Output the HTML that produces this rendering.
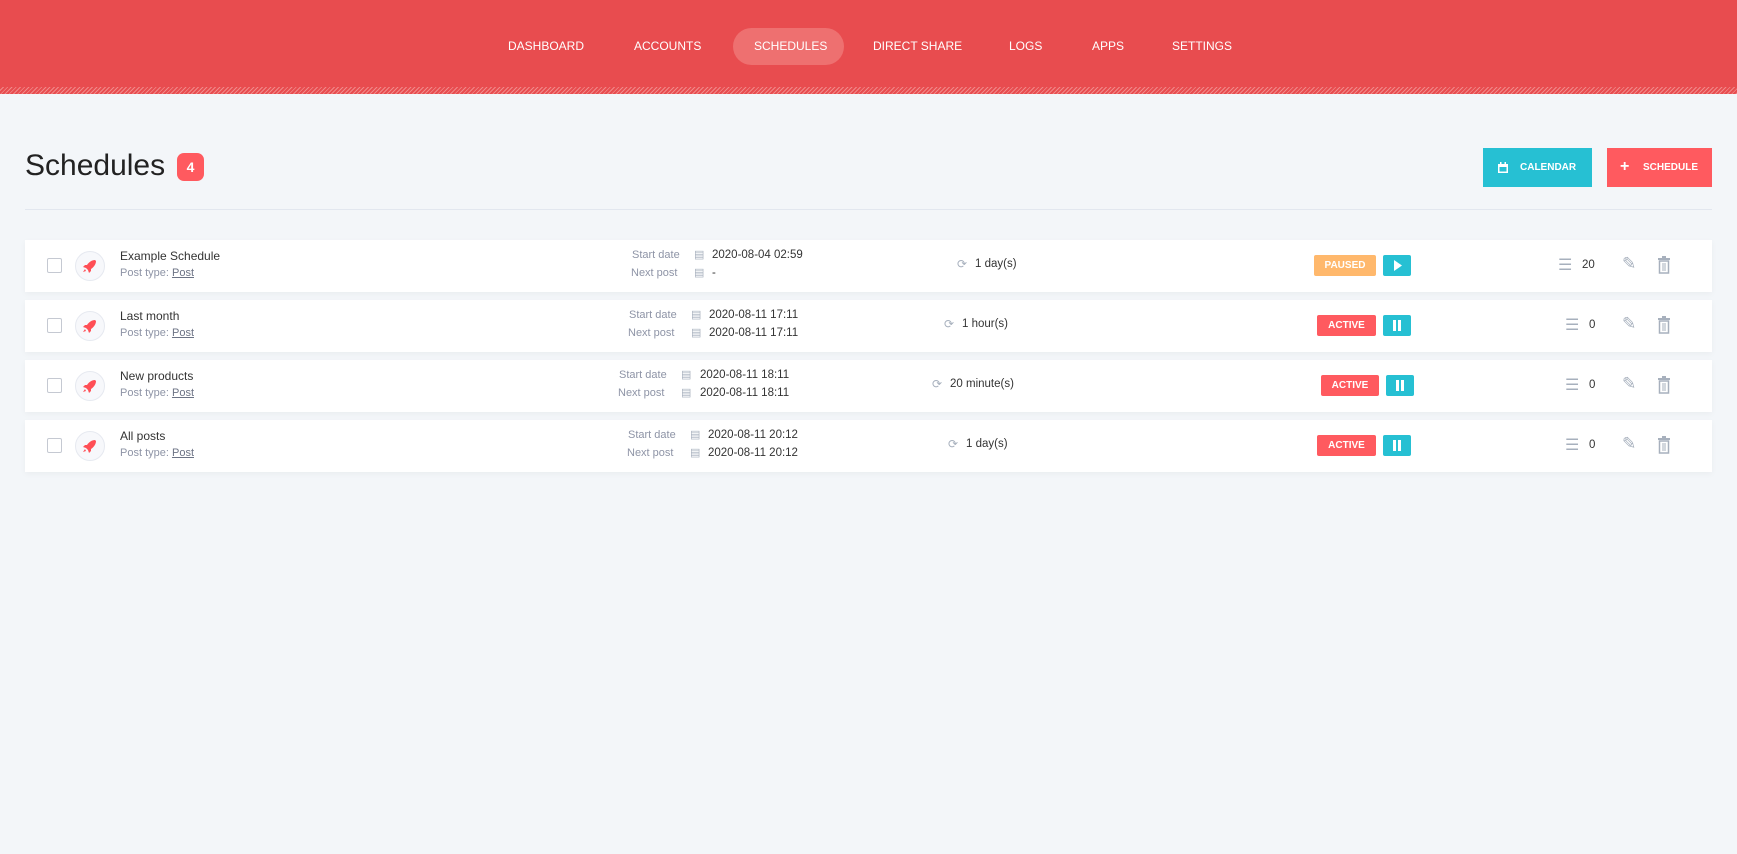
<!DOCTYPE html>
<html><head><meta charset="utf-8"><style>
*{margin:0;padding:0;box-sizing:border-box}
body{width:1737px;height:854px;background:#f3f6f9;font-family:"Liberation Sans",sans-serif;position:relative;overflow:hidden;color:#333}
.hdr{position:absolute;left:0;top:0;width:1737px;height:94px;background:#e84c4f}
.stripe{position:absolute;left:0;top:87px;width:1737px;height:7px;background:repeating-linear-gradient(135deg,#e84c4f 0 2px,#f08a8a 2px 3px)}
.nav{position:absolute;top:39px;color:#fff;font-size:12px;letter-spacing:0}
.pill{position:absolute;left:733px;top:28px;width:111px;height:37px;border-radius:19px;background:#ee7070}
.a{position:absolute;white-space:nowrap}
.title{left:25px;top:149px;font-size:30px;color:#222}
.badge{position:absolute;left:177px;top:153px;width:27px;height:28px;background:#ff5a5f;border-radius:7px;color:#fff;font-size:14px;font-weight:bold;text-align:center;line-height:28px}
.btn{position:absolute;top:148px;height:39px;color:#fff;font-size:10px;font-weight:bold;line-height:39px}
.hr{position:absolute;left:25px;top:209px;width:1687px;height:1px;background:#e2e7ef}
.row{position:absolute;left:25px;width:1687px;height:52px;background:#fff;box-shadow:0 2px 6px rgba(0,0,0,.04)}
.cb{position:absolute;left:22px;top:18px;width:15px;height:15px;border:1px solid #c5c9d2;border-radius:2px;background:#fff}
.rk{position:absolute;left:50px;top:11px;width:30px;height:30px;border-radius:50%;border:1px solid #e6e9f0;background:#f7f8fb}
.nm{left:95px;top:9px;font-size:12px;color:#333}
.pt{left:95px;top:27px;font-size:11px;color:#8e94a6}
.pt u{color:#6c7385}
.lb{font-size:11px;color:#8e94a6}
.vl{font-size:11.5px;color:#333}
.st{position:absolute;top:15px;height:21px;color:#fff;font-size:10px;font-weight:bold;line-height:21px;text-align:center;border-radius:2px}
.pl{position:absolute;top:15px;width:28px;height:21px;background:#26c0d3;border-radius:2px}
.g{color:#a7b0bd}
</style></head><body>
<div class="hdr"></div><div class="stripe"></div>
<div class="pill"></div>
<div class="nav" style="left:508px">DASHBOARD</div>
<div class="nav" style="left:634px">ACCOUNTS</div>
<div class="nav" style="left:754px">SCHEDULES</div>
<div class="nav" style="left:873px">DIRECT SHARE</div>
<div class="nav" style="left:1009px">LOGS</div>
<div class="nav" style="left:1092px">APPS</div>
<div class="nav" style="left:1172px">SETTINGS</div>

<div class="a title">Schedules</div>
<div class="badge">4</div>
<div class="btn" style="left:1483px;width:109px;background:#26c0d3">
<svg style="position:absolute;left:15px;top:14px" width="10" height="11" viewBox="0 0 10 11"><rect x="0" y="2" width="10" height="9" fill="#fff"/><rect x="2" y="0" width="1.5" height="3" fill="#fff"/><rect x="6.5" y="0" width="1.5" height="3" fill="#fff"/><rect x="1.5" y="5" width="7" height="4.5" fill="#26c0d3"/></svg>
<span style="position:absolute;left:37px">CALENDAR</span></div>
<div class="btn" style="left:1607px;width:105px;background:#ff5a5f">
<span style="position:absolute;left:13px;font-size:16px;top:-1px">+</span>
<span style="position:absolute;left:36px">SCHEDULE</span></div>
<div class="hr"></div>

<div class="row" style="top:240px">
<div class="cb"></div><div class="rk"><svg width="28" height="28" viewBox="0 0 28 28"><path d="M19 8c-3 0-6 2-8 5l-2 0-2 2 3 1 2 2 1 3 2-2 0-2c3-2 5-5 5-8z M9 17l-2 3 3-1z" fill="#ff4f56"/></svg></div>
<div class="a nm">Example Schedule</div><div class="a pt">Post type: <u>Post</u></div>
<div class="a lb" style="left:607px;top:9px">Start date</div><div class="a lb" style="left:606px;top:27px">Next post</div>
<div class="a g" style="left:669px;top:8px;font-size:11px">&#9636;</div><div class="a g" style="left:669px;top:26px;font-size:11px">&#9636;</div>
<div class="a vl" style="left:687px;top:9px">2020-08-04 02:59</div><div class="a vl" style="left:687px;top:27px">-</div>
<div class="a g" style="left:932px;top:17px;font-size:12px">&#10227;</div><div class="a vl" style="left:950px;top:18px">1 day(s)</div>
<div class="st" style="left:1289px;width:62px;background:#ffb86c">PAUSED</div>
<div class="pl" style="left:1358px"><svg width="28" height="21"><path d="M11 5l8 5.5-8 5.5z" fill="#fff"/></svg></div>
<div class="a g" style="left:1533px;top:15px;font-size:16px">&#9776;</div><div class="a vl" style="left:1557px;top:19px">20</div>
<div class="a g" style="left:1597px;top:14px;font-size:17px">&#9998;</div>
<svg class="a" style="left:1632px;top:16px" width="14" height="18"><rect x="1" y="2" width="12" height="2" fill="#a7b0bd"/><rect x="5" y="0" width="4" height="2" fill="#a7b0bd"/><rect x="2.5" y="5" width="9" height="12" fill="none" stroke="#a7b0bd" stroke-width="1.5"/><rect x="5.5" y="7" width="1" height="8" fill="#a7b0bd"/><rect x="7.5" y="7" width="1" height="8" fill="#a7b0bd"/></svg>
</div>

<div class="row" style="top:300px">
<div class="cb"></div><div class="rk"><svg width="28" height="28" viewBox="0 0 28 28"><path d="M19 8c-3 0-6 2-8 5l-2 0-2 2 3 1 2 2 1 3 2-2 0-2c3-2 5-5 5-8z M9 17l-2 3 3-1z" fill="#ff4f56"/></svg></div>
<div class="a nm">Last month</div><div class="a pt">Post type: <u>Post</u></div>
<div class="a lb" style="left:604px;top:9px">Start date</div><div class="a lb" style="left:603px;top:27px">Next post</div>
<div class="a g" style="left:666px;top:8px;font-size:11px">&#9636;</div><div class="a g" style="left:666px;top:26px;font-size:11px">&#9636;</div>
<div class="a vl" style="left:684px;top:9px">2020-08-11 17:11</div><div class="a vl" style="left:684px;top:27px">2020-08-11 17:11</div>
<div class="a g" style="left:919px;top:17px;font-size:12px">&#10227;</div><div class="a vl" style="left:937px;top:18px">1 hour(s)</div>
<div class="st" style="left:1292px;width:59px;background:#ff5a5f">ACTIVE</div>
<div class="pl" style="left:1358px"><svg width="28" height="21"><rect x="10" y="5" width="3" height="11" fill="#fff"/><rect x="15" y="5" width="3" height="11" fill="#fff"/></svg></div>
<div class="a g" style="left:1540px;top:15px;font-size:16px">&#9776;</div><div class="a vl" style="left:1564px;top:19px">0</div>
<div class="a g" style="left:1597px;top:14px;font-size:17px">&#9998;</div>
<svg class="a" style="left:1632px;top:16px" width="14" height="18"><rect x="1" y="2" width="12" height="2" fill="#a7b0bd"/><rect x="5" y="0" width="4" height="2" fill="#a7b0bd"/><rect x="2.5" y="5" width="9" height="12" fill="none" stroke="#a7b0bd" stroke-width="1.5"/><rect x="5.5" y="7" width="1" height="8" fill="#a7b0bd"/><rect x="7.5" y="7" width="1" height="8" fill="#a7b0bd"/></svg>
</div>

<div class="row" style="top:360px">
<div class="cb"></div><div class="rk"><svg width="28" height="28" viewBox="0 0 28 28"><path d="M19 8c-3 0-6 2-8 5l-2 0-2 2 3 1 2 2 1 3 2-2 0-2c3-2 5-5 5-8z M9 17l-2 3 3-1z" fill="#ff4f56"/></svg></div>
<div class="a nm">New products</div><div class="a pt">Post type: <u>Post</u></div>
<div class="a lb" style="left:594px;top:9px">Start date</div><div class="a lb" style="left:593px;top:27px">Next post</div>
<div class="a g" style="left:656px;top:8px;font-size:11px">&#9636;</div><div class="a g" style="left:656px;top:26px;font-size:11px">&#9636;</div>
<div class="a vl" style="left:675px;top:9px">2020-08-11 18:11</div><div class="a vl" style="left:675px;top:27px">2020-08-11 18:11</div>
<div class="a g" style="left:907px;top:17px;font-size:12px">&#10227;</div><div class="a vl" style="left:925px;top:18px">20 minute(s)</div>
<div class="st" style="left:1296px;width:58px;background:#ff5a5f">ACTIVE</div>
<div class="pl" style="left:1361px"><svg width="28" height="21"><rect x="10" y="5" width="3" height="11" fill="#fff"/><rect x="15" y="5" width="3" height="11" fill="#fff"/></svg></div>
<div class="a g" style="left:1540px;top:15px;font-size:16px">&#9776;</div><div class="a vl" style="left:1564px;top:19px">0</div>
<div class="a g" style="left:1597px;top:14px;font-size:17px">&#9998;</div>
<svg class="a" style="left:1632px;top:16px" width="14" height="18"><rect x="1" y="2" width="12" height="2" fill="#a7b0bd"/><rect x="5" y="0" width="4" height="2" fill="#a7b0bd"/><rect x="2.5" y="5" width="9" height="12" fill="none" stroke="#a7b0bd" stroke-width="1.5"/><rect x="5.5" y="7" width="1" height="8" fill="#a7b0bd"/><rect x="7.5" y="7" width="1" height="8" fill="#a7b0bd"/></svg>
</div>

<div class="row" style="top:420px">
<div class="cb"></div><div class="rk"><svg width="28" height="28" viewBox="0 0 28 28"><path d="M19 8c-3 0-6 2-8 5l-2 0-2 2 3 1 2 2 1 3 2-2 0-2c3-2 5-5 5-8z M9 17l-2 3 3-1z" fill="#ff4f56"/></svg></div>
<div class="a nm">All posts</div><div class="a pt">Post type: <u>Post</u></div>
<div class="a lb" style="left:603px;top:9px">Start date</div><div class="a lb" style="left:602px;top:27px">Next post</div>
<div class="a g" style="left:665px;top:8px;font-size:11px">&#9636;</div><div class="a g" style="left:665px;top:26px;font-size:11px">&#9636;</div>
<div class="a vl" style="left:683px;top:9px">2020-08-11 20:12</div><div class="a vl" style="left:683px;top:27px">2020-08-11 20:12</div>
<div class="a g" style="left:923px;top:17px;font-size:12px">&#10227;</div><div class="a vl" style="left:941px;top:18px">1 day(s)</div>
<div class="st" style="left:1292px;width:59px;background:#ff5a5f">ACTIVE</div>
<div class="pl" style="left:1358px"><svg width="28" height="21"><rect x="10" y="5" width="3" height="11" fill="#fff"/><rect x="15" y="5" width="3" height="11" fill="#fff"/></svg></div>
<div class="a g" style="left:1540px;top:15px;font-size:16px">&#9776;</div><div class="a vl" style="left:1564px;top:19px">0</div>
<div class="a g" style="left:1597px;top:14px;font-size:17px">&#9998;</div>
<svg class="a" style="left:1632px;top:16px" width="14" height="18"><rect x="1" y="2" width="12" height="2" fill="#a7b0bd"/><rect x="5" y="0" width="4" height="2" fill="#a7b0bd"/><rect x="2.5" y="5" width="9" height="12" fill="none" stroke="#a7b0bd" stroke-width="1.5"/><rect x="5.5" y="7" width="1" height="8" fill="#a7b0bd"/><rect x="7.5" y="7" width="1" height="8" fill="#a7b0bd"/></svg>
</div>
</body></html>
